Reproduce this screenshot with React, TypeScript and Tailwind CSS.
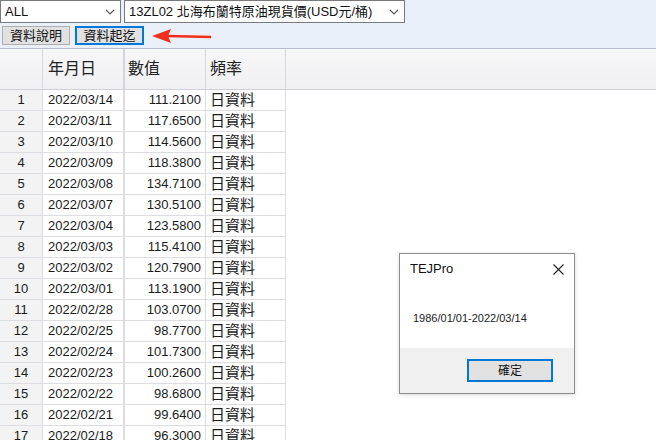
const rows: [string, string][] = [
  ['2022/03/14', '111.2100'],
  ['2022/03/11', '117.6500'],
  ['2022/03/10', '114.5600'],
  ['2022/03/09', '118.3800'],
  ['2022/03/08', '134.7100'],
  ['2022/03/07', '130.5100'],
  ['2022/03/04', '123.5800'],
  ['2022/03/03', '115.4100'],
  ['2022/03/02', '120.7900'],
  ['2022/03/01', '113.1900'],
  ['2022/02/28', '103.0700'],
  ['2022/02/25', '98.7700'],
  ['2022/02/24', '101.7300'],
  ['2022/02/23', '100.2600'],
  ['2022/02/22', '98.6800'],
  ['2022/02/21', '99.6400'],
  ['2022/02/18', '96.3000'],
]

const font = { fontFamily: '"Liberation Sans", "Noto Sans CJK TC", sans-serif' }

function Chevron() {
  return (
    <svg width="10" height="6" viewBox="0 0 10 6" className="shrink-0">
      <path d="M1 1l4 4 4-4" fill="none" stroke="#555" strokeWidth="1.1" />
    </svg>
  )
}

function Select({ label, className }: { label: string; className: string }) {
  return (
    <div
      className={`h-[23px] bg-white border border-[#7a7a7a] flex items-center justify-between pl-[4px] pr-[5px] text-[13px] text-[#111] ${className}`}
    >
      <span>{label}</span>
      <Chevron />
    </div>
  )
}

export default function App() {
  return (
    <div className="w-[656px] h-[440px] bg-white relative overflow-hidden" style={font}>
      {/* toolbar */}
      <div className="h-[48px] bg-[#eaf0f9] flex flex-col gap-[3px]">
        <div className="flex gap-[3px]">
          <Select label="ALL" className="w-[121px]" />
          <Select label="13ZL02 北海布蘭特原油現貨價(USD元/桶)" className="w-[281px]" />
        </div>
        <div className="flex gap-[5px] pl-[2px]">
          <button className="h-[19px] w-[68px] bg-[#e1e1e1] border border-[#adadad] text-[13px] leading-none text-[#111] flex items-center justify-center">
            資料說明
          </button>
          <button className="h-[19px] w-[69px] bg-[#e1e1e1] border-2 border-[#0078d7] text-[13px] leading-none text-[#111] flex items-center justify-center">
            資料起迄
          </button>
        </div>
      </div>

      {/* grid */}
      <div className="border-t border-[#b9bccb]">
        <div className="flex h-[41px] bg-gradient-to-b from-[#f7f7f8] to-[#f0f0f2] border-b border-[#cfd0d8] text-[16px] text-[#222]">
          <div className="w-[43px] border-r border-[#d8d8e0]" />
          <div className="w-[82px] border-r-2 border-[#d4d4dc] pl-[5px] flex items-center">年月日</div>
          <div className="w-[81px] border-r border-[#d8d8e0] pl-[3px] flex items-center">數值</div>
          <div className="w-[80px] border-r border-[#d8d8e0] pl-[4px] flex items-center">頻率</div>
          <div className="flex-1" />
        </div>
        {rows.map(([d, v], i) => (
          <div key={i} className="flex h-[21px] text-[13px] text-[#1a1a1a]">
            <div className="w-[43px] bg-[#f3f3f3] border-r border-b border-[#dcdce2] flex items-center justify-center">
              {i + 1}
            </div>
            <div className="w-[82px] border-r-2 border-b border-[#dcdce2] pl-[5px] flex items-center">{d}</div>
            <div className="w-[81px] border-r border-b border-[#dcdce2] pr-[4px] flex items-center justify-end">{v}</div>
            <div className="w-[80px] border-r border-b border-[#dcdce2] pl-[4px] flex items-center text-[15px]">日資料</div>
          </div>
        ))}
      </div>

      {/* annotation arrow */}
      <svg className="absolute left-[151px] top-[27px]" width="62" height="18" viewBox="0 0 62 18">
        <line x1="16" y1="9" x2="60" y2="10" stroke="#f0301c" strokeWidth="2.6" />
        <path d="M1 9 L20 2 L17 9 L20 16 Z" fill="#f0301c" />
      </svg>

      {/* dialog */}
      <div className="absolute left-[399px] top-[253px] w-[176px] h-[141px] bg-white border border-[#8c8c8c] shadow-[0_1px_4px_rgba(0,0,0,0.15)] flex flex-col">
        <div className="h-[30px] flex items-center justify-between pl-[10px] pr-[10px] text-[13px] text-[#111]">
          <span>TEJPro</span>
          <svg width="11" height="11" viewBox="0 0 11 11">
            <path d="M0.5 0.5l10 10M10.5 0.5l-10 10" stroke="#222" strokeWidth="1.1" />
          </svg>
        </div>
        <div className="h-[64px] pl-[13px] pt-[26px] text-[11px] text-[#222]">1986/01/01-2022/03/14</div>
        <div className="flex-1 bg-[#f0f0f0] flex items-start justify-end pt-[11px] pr-[21px]">
          <button className="w-[86px] h-[23px] bg-[#e1e1e1] border-2 border-[#0078d7] text-[12px] text-[#111] flex items-center justify-center">
            確定
          </button>
        </div>
      </div>
    </div>
  )
}
